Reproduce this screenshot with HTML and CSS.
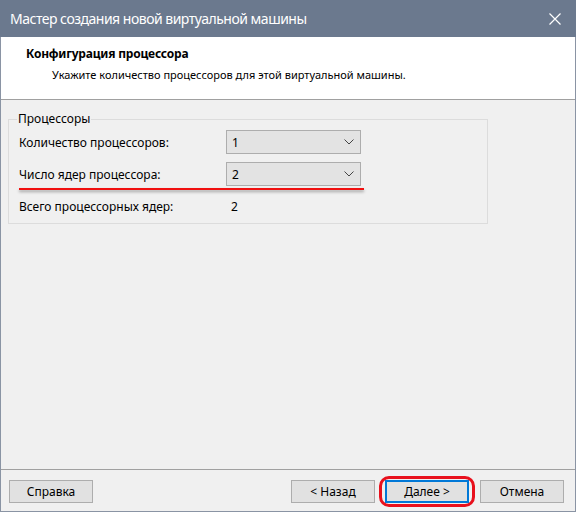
FILE: index.html
```html
<!DOCTYPE html>
<html lang="ru">
<head>
<meta charset="UTF-8">
<title>Мастер создания новой виртуальной машины</title>
<link rel="stylesheet" href="styles.css">
</head>
<body>

<div class="window">
  <div class="titlebar">
    <span class="title">Мастер создания новой виртуальной машины</span>
    <svg class="close" width="12" height="12" viewBox="0 0 12 12">
      <path d="M0.5 0.5 L11.5 11.5 M11.5 0.5 L0.5 11.5" stroke="#fff" stroke-width="1.2" fill="none"/>
    </svg>
  </div>

  <div class="header">
    <div class="head-title">Конфигурация процессора</div>
    <div class="head-sub">Укажите количество процессоров для этой виртуальной машины.</div>
  </div>

  <div class="content">
    <fieldset class="group">
      <legend>Процессоры</legend>
      <div class="row">
        <span class="label">Количество процессоров:</span>
        <div class="combo"><span>1</span><svg width="10" height="6" viewBox="0 0 10 6"><path d="M0.5 0.5 L5 5 L9.5 0.5" stroke="#444" fill="none"/></svg></div>
      </div>
      <div class="row marked">
        <span class="label">Число ядер процессора:</span>
        <div class="combo"><span>2</span><svg width="10" height="6" viewBox="0 0 10 6"><path d="M0.5 0.5 L5 5 L9.5 0.5" stroke="#444" fill="none"/></svg></div>
      </div>
      <div class="row total">
        <span class="label">Всего процессорных ядер:</span>
        <span class="value">2</span>
      </div>
    </fieldset>
  </div>

  <div class="footer">
    <button class="btn">Справка</button>
    <div class="spacer"></div>
    <button class="btn">&lt; Назад</button>
    <div class="next-wrap"><button class="btn default">Далее &gt;</button></div>
    <button class="btn">Отмена</button>
  </div>
</div>

</body>
</html>
```

FILE: styles.css
```css
body {
  margin: 0;
  font-family: "Noto Sans", "Open Sans", sans-serif;
  font-size: 12px;
  color: #000;
}
.window {
  width: 576px;
  height: 512px;
  box-sizing: border-box;
  border: 1px solid #8a94a4;
  border-top: none;
  background: #f0f0f0;
  display: flex;
  flex-direction: column;
}
.titlebar {
  height: 37px;
  margin: 0 -1px;
  background: #6b798e;
  display: flex;
  align-items: center;
  padding: 0 15px 0 10px;
}
.title {
  flex: 1;
  color: #fff;
  font-size: 14px;
  letter-spacing: -0.5px;
}
.close {
  display: block;
}
.header {
  height: 63px;
  background: #fff;
  border-bottom: 1px solid #a0a0a0;
  box-sizing: border-box;
  padding: 8px 0 0 25px;
}
.head-title {
  font-weight: bold;
  line-height: 17px;
  letter-spacing: -0.2px;
}
.head-sub {
  margin-top: 4px;
  padding-left: 26px;
  line-height: 17px;
  font-size: 11px;
}
.content {
  flex: 1;
  padding: 12px 0 0 7px;
}
.group {
  width: 480px;
  height: 112px;
  box-sizing: border-box;
  margin: 0;
  padding: 4px 0 0 10px;
  border: 1px solid #dcdcdc;
}
.group legend {
  padding: 0 1px;
  margin-left: -2px;
  line-height: 14px;
}
.row {
  display: flex;
  align-items: center;
  height: 24px;
  margin-bottom: 8px;
}
.label {
  width: 207px;
}
.combo {
  width: 135px;
  height: 24px;
  box-sizing: border-box;
  border: 1px solid #adadad;
  background: #e3e3e3;
  display: flex;
  align-items: center;
  justify-content: space-between;
  padding: 0 6px 0 5px;
}
.marked {
  position: relative;
}
.marked::after {
  content: "";
  position: absolute;
  left: 0;
  top: 26px;
  width: 345px;
  height: 2px;
  background: #f01010;
  box-shadow: 0 2px 3px rgba(0, 0, 0, 0.35);
}
.total {
  margin-top: 2px;
}
.value {
  padding-left: 5px;
}
.footer {
  height: 42px;
  border-top: 1px solid #a0a0a0;
  box-sizing: border-box;
  display: flex;
  align-items: flex-start;
  padding: 10px 11px 0 8px;
}
.spacer {
  flex: 1;
}
.btn {
  width: 84px;
  height: 23px;
  font-family: inherit;
  font-size: 12px;
  background: #e1e1e1;
  border: 1px solid #adadad;
  padding: 0;
  margin: 0;
}
.next-wrap {
  margin: -4px 5px 0 4px;
  padding: 1px 3px;
  border: 3px solid #e8101c;
  border-radius: 10px;
}
.btn.default {
  border: 2px solid #0078d7;
}
```
